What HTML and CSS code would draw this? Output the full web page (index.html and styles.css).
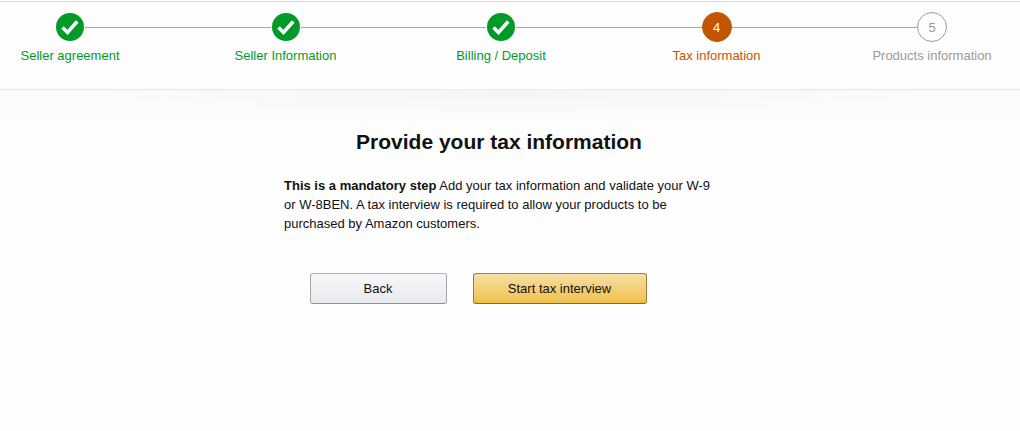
FILE: index.html
```html
<!DOCTYPE html>
<html lang="en">
<head>
	<meta charset="utf-8">
	<meta name="viewport" content="width=device-width, initial-scale=1.0">
	<title>Provide your tax information</title>
	<link rel="stylesheet" href="styles.css">
</head>
<body>
	<header class="header">
		<ol class="steps">
			<li class="step step-done">
				<span class="step-icon">
					<svg viewBox="0 0 30 30" aria-hidden="true"><circle cx="15" cy="15" r="14"/><path d="M7.500 15.500l5 5 9.700-11"/></svg>
				</span>
				<span class="step-label">Seller agreement</span>
			</li>
			<li class="step step-done">
				<span class="step-icon">
					<svg viewBox="0 0 30 30" aria-hidden="true"><circle cx="15" cy="15" r="14"/><path d="M7.500 15.500l5 5 9.700-11"/></svg>
				</span>
				<span class="step-label">Seller Information</span>
			</li>
			<li class="step step-done">
				<span class="step-icon">
					<svg viewBox="0 0 30 30" aria-hidden="true"><circle cx="15" cy="15" r="14"/><path d="M7.500 15.500l5 5 9.700-11"/></svg>
				</span>
				<span class="step-label">Billing / Deposit</span>
			</li>
			<li class="step step-current" aria-current="step">
				<span class="step-icon">4</span>
				<span class="step-label">Tax information</span>
			</li>
			<li class="step">
				<span class="step-icon">5</span>
				<span class="step-label">Products information</span>
			</li>
		</ol>
	</header>
	<main class="content">
		<h1>Provide your tax information</h1>
		<p><strong>This is a mandatory step</strong> Add your tax information and validate your W-9 or W-8BEN. A tax interview is required to allow your products to be purchased by Amazon customers.</p>
		<div class="buttons">
			<button type="button" class="btn btn-back">Back</button>
			<button type="button" class="btn btn-primary">Start tax interview</button>
		</div>
	</main>
</body>
</html>
```
FILE: styles.css
```css
* {
	box-sizing: border-box;
}

body {
	margin: 0;
	background-color: #fefefe;
	color: #111;
	font-family: "Liberation Sans", Arial, sans-serif;
	font-size: 13px;
	line-height: 19px;
}

/*Steps*/

.header {
	margin-top: 1px;
	padding: 10px 28px 24px 10px;
	border-top: 1px solid #d8d8d8;
	border-bottom: 1px solid #e7e7e7;
}

.steps {
	display: flex;
	justify-content: space-between;
	margin: 0;
	padding: 0;
	list-style: none;
	/* connecting line, runs between the first and last circle */
	background: linear-gradient(#a6a6a6, #a6a6a6) center 15px / calc(100% - 120px) 1px no-repeat;
}

.step {
	display: flex;
	flex-direction: column;
	align-items: center;
	gap: 4px;
	width: 120px;
	color: #999;
	white-space: nowrap;
}

.step-icon {
	display: flex;
	align-items: center;
	justify-content: center;
	width: 30px;
	height: 30px;
	border: 1px solid #999;
	border-radius: 50%;
	background-color: #fefefe;
}

.step-done {
	color: #009a29;
}

.step-done .step-icon {
	border: 0;
}

.step-icon svg {
	width: 30px;
	height: 30px;
	fill: #009a29;
}

.step-icon path {
	fill: none;
	stroke: #fff;
	stroke-width: 3.5;
}

.step-current {
	color: #c45500;
}

.step-current .step-icon {
	border-color: #c45500;
	background-color: #c45500;
	color: #fff;
}

/*Content*/

.content {
	padding: 38px 42px 38px 20px;
	background: radial-gradient(ellipse 40% 30px at 50% 0, #f5f5f5, rgba(254, 254, 254, 0)), linear-gradient(#fafafa, #fefefe 40px);
}

.content h1 {
	margin: 0 0 21px;
	font-size: 21px;
	line-height: 27px;
	text-align: center;
}

.content p {
	max-width: 430px;
	margin: 0 auto 40px;
}

.buttons {
	display: flex;
	justify-content: center;
	gap: 26px;
	padding-right: 42px;
}

.btn {
	height: 31px;
	padding: 0;
	border: 1px solid;
	border-radius: 3px;
	color: #111;
	font: inherit;
	cursor: pointer;
}

.btn-back {
	width: 137px;
	border-color: #adb1b8 #a2a6ac #8d9096;
	background: linear-gradient(#f7f8fa, #e7e9ec);
}

.btn-primary {
	width: 174px;
	border-color: #a88734 #9c7e31 #846a29;
	background: linear-gradient(#f7dfa5, #f0c14b);
}
```
